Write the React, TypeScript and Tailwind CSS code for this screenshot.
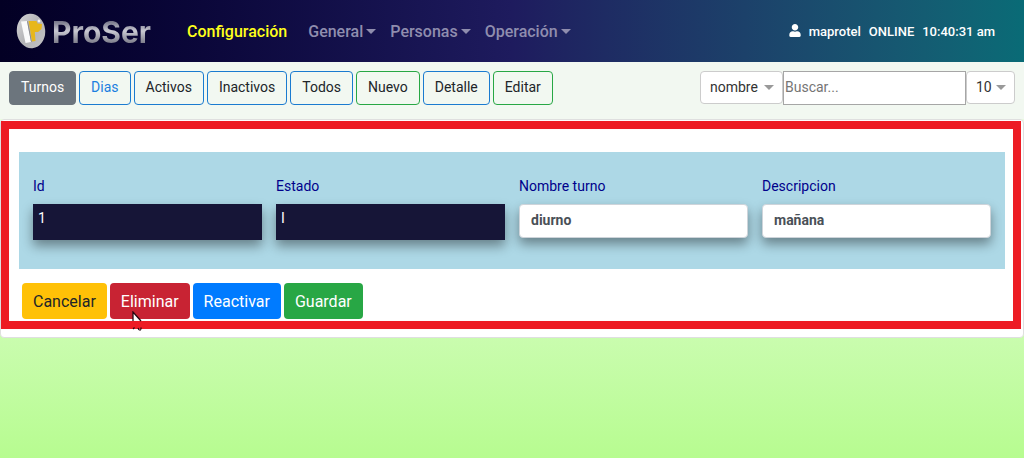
import React from "react";

function Caret({ className = "" }: { className?: string }) {
  return (
    <svg viewBox="0 0 10 5" className={"h-[5px] w-[10px] " + className} aria-hidden="true">
      <path d="M0 0H10L5 5Z" fill="currentColor" />
    </svg>
  );
}

function Logo() {
  return (
    <a href="#inicio" className="flex items-center gap-[6px]">
      <svg viewBox="0 0 30 36" className="h-9 w-[30px]" aria-hidden="true">
        <defs>
          <linearGradient id="disc" x1="0" y1="0" x2="1" y2="1">
            <stop offset="0" stopColor="#d6d6d8" />
            <stop offset="0.5" stopColor="#b4b4b6" />
            <stop offset="1" stopColor="#c4c4c6" />
          </linearGradient>
        </defs>
        <ellipse cx="15" cy="18" rx="14.2" ry="17.2" fill="url(#disc)" transform="rotate(-5 15 18)" />
        <path d="M5 8.500L11 8L15 29L9.500 30Z" fill="#fafafa" />
        <path d="M11 8L12 8.500L15.800 28.500L15 29Z" fill="#85858a" />
        <path
          d="M12.500 8H20.500L21.500 10.500L26 11L25.500 16L22 19H18.800L19.500 28L16 28.500L13.800 15Z"
          fill="#e7b71c"
        />
        <circle cx="23" cy="8" r="1.4" fill="#f4f4f4" />
      </svg>
      <span className="bg-gradient-to-b from-[#77778a] from-25% via-[#c9c9d2] via-50% to-[#82828f] to-80% bg-clip-text pt-[2px] font-['Inter',sans-serif] text-[30px] leading-9 font-bold text-transparent">
        ProSer
      </span>
    </a>
  );
}

const menus = ["General", "Personas", "Operación"];

const tools = [
  { label: "Turnos", style: "border-[#6c757d] bg-[#6c757d] text-white" },
  { label: "Dias", style: "border-[#1b7bd0] text-[#1b7fe0]" },
  { label: "Activos", style: "border-[#1b7bd0] text-[#212529]" },
  { label: "Inactivos", style: "border-[#1b7bd0] text-[#212529]" },
  { label: "Todos", style: "border-[#1b7bd0] text-[#212529]" },
  { label: "Nuevo", style: "border-[#28a745] text-[#212529]" },
  { label: "Detalle", style: "border-[#1b7bd0] text-[#212529]" },
  { label: "Editar", style: "border-[#28a745] text-[#212529]" },
];

const actions = [
  { label: "Cancelar", style: "bg-[#ffc107] text-[#212529]" },
  { label: "Eliminar", style: "bg-[#c82333] text-white" },
  { label: "Reactivar", style: "bg-[#007bff] text-white" },
  { label: "Guardar", style: "bg-[#28a745] text-white" },
];

const fieldShadow = "shadow-[0_6px_12px_rgba(0,0,0,0.4)]";

function Picker({ label, options, width }: { label: string; options: string[]; width: string }) {
  return (
    <div className={"relative h-[33px] " + width}>
      <select
        aria-label={label}
        className="h-full w-full appearance-none rounded border border-[#cccccc] bg-white pb-[2px] pl-[9px] text-sm leading-5 text-[#333333]"
      >
        {options.map((o) => (
          <option key={o}>{o}</option>
        ))}
      </select>
      <Caret className="pointer-events-none absolute top-[14px] right-[9px] text-[#999999]" />
    </div>
  );
}

function Field({ id, label, value, readOnly = false }: { id: string; label: string; value: string; readOnly?: boolean }) {
  return (
    <div className="flex min-w-0 flex-1 flex-col gap-2">
      <label htmlFor={id} className="text-sm leading-5 text-[#00008b]">
        {label}
      </label>
      {readOnly ? (
        <input
          id={id}
          readOnly
          defaultValue={value}
          className={"h-9 w-full bg-[#161537] px-[5px] pb-2 text-sm text-white outline-none " + fieldShadow}
        />
      ) : (
        <input
          id={id}
          defaultValue={value}
          className={
            "h-[34px] w-full rounded border border-[#ced4da] bg-white px-[11px] pb-[2px] text-sm font-bold text-[#495057] outline-none " +
            fieldShadow
          }
        />
      )}
    </div>
  );
}

export default function App() {
  return (
    <div className="flex min-h-screen flex-col bg-gradient-to-b from-[#fafafa] to-[#b7fc90] font-['Roboto',sans-serif]">
      <header className="flex h-[62px] items-center bg-gradient-to-r from-[#030024] via-[#1e1b5e] via-50% to-[#096b76] pr-[29px] pl-4">
        <Logo />
        <nav className="ml-9 flex items-center gap-[14px] pt-[2px] text-base leading-6 font-medium text-[#8f8dae]">
          <a href="#configuracion" className="mr-[7px] text-[#ffff1a]">
            Configuración
          </a>
          {menus.map((m) => (
            <button key={m} type="button" className="flex items-center gap-[3px]">
              {m}
              <Caret className="mb-[2px]" />
            </button>
          ))}
        </nav>
        <div className="ml-auto flex items-center gap-2 pt-[2px] text-[13px] leading-5 font-medium text-white">
          <svg viewBox="0 0 448 512" className="mb-[3px] h-[13px] w-3" fill="currentColor" aria-hidden="true">
            <path d="M224 256c70.700 0 128-57.300 128-128S294.700 0 224 0 96 57.300 96 128s57.300 128 128 128zm89.600 32h-16.700c-22.200 10.200-46.900 16-72.900 16s-50.600-5.800-72.900-16h-16.700C60.200 288 0 348.200 0 422.400V464c0 26.500 21.500 48 48 48h352c26.500 0 48-21.500 48-48v-41.600c0-74.200-60.200-134.400-134.400-134.400z" />
          </svg>
          <span>maprotel</span>
          <span>ONLINE</span>
          <span>10:40:31 am</span>
        </div>
      </header>

      <div className="flex items-start justify-between bg-[#f2f8f1] px-[9px] pt-[9px] pb-[14px]">
        <div className="flex gap-[3px]">
          {tools.map((t) => (
            <button
              key={t.label}
              type="button"
              className={"h-[34px] rounded border px-[11px] pb-[2px] text-sm leading-5 " + t.style}
            >
              {t.label}
            </button>
          ))}
        </div>
        <div className="flex">
          <Picker label="Campo" options={["nombre"]} width="w-[83px]" />
          <input
            type="text"
            aria-label="Buscar"
            placeholder="Buscar..."
            className="h-[34px] w-[183px] border border-[#a6a6a6] bg-white px-px pb-[2px] text-sm text-[#333333] placeholder:text-[#757575]"
          />
          <Picker label="Filas" options={["10"]} width="w-[49px]" />
        </div>
      </div>

      <main className="rounded border border-[#dfdfdf] bg-white pt-px pr-[2px] pb-2">
        <section className="relative border-8 border-[#ed1c24] pt-[23px] pr-2 pb-[2px] pl-[10px]">
          <form onSubmit={(e) => e.preventDefault()}>
            <div className="flex items-start gap-[14px] bg-[#add8e6] px-[14px] pt-6 pb-[29px]">
              <Field id="id" label="Id" value="1" readOnly />
              <Field id="estado" label="Estado" value="I" readOnly />
              <Field id="nombre" label="Nombre turno" value="diurno" />
              <Field id="descripcion" label="Descripcion" value="mañana" />
            </div>
            <div className="mt-[14px] flex gap-[3px] pl-[3px]">
              {actions.map((a) => (
                <button key={a.label} type="button" className={"h-9 rounded px-[11px] pt-[2px] text-base leading-6 " + a.style}>
                  {a.label}
                </button>
              ))}
            </div>
          </form>
          <svg
            viewBox="0 0 12 20"
            className="pointer-events-none absolute -bottom-[10px] left-[123px] h-5 w-3"
            aria-hidden="true"
          >
            <path d="M1 1V10H9Z" fill="#ffffff" />
            <path d="M1 10V1L9 10" fill="none" stroke="#250812" strokeWidth="1.300" />
            <path d="M1 18L2.500 16.500M6 17L7 19M7 19H9M9 16.500V18.500" fill="none" stroke="#250812" strokeWidth="1.200" />
          </svg>
        </section>
      </main>
    </div>
  );
}
